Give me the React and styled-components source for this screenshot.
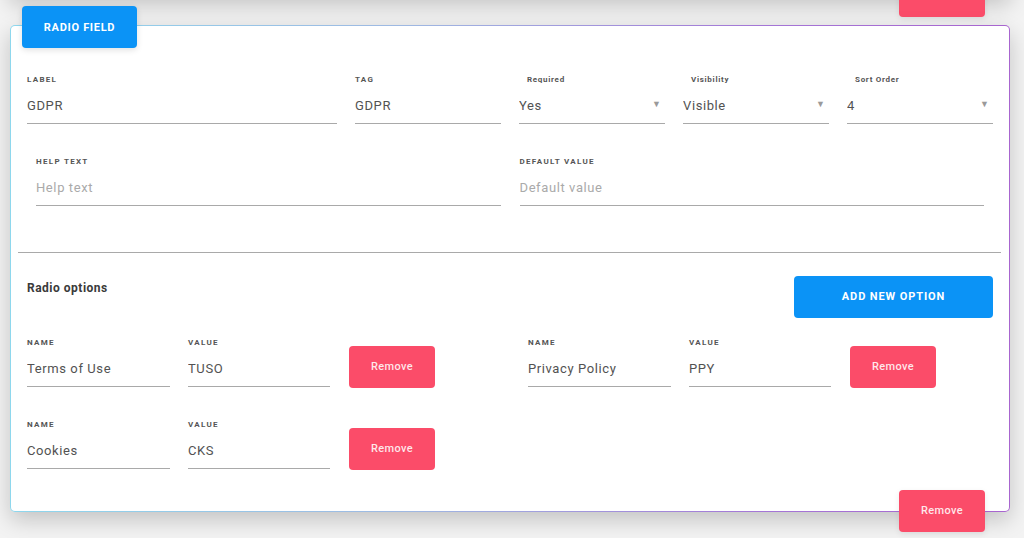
import React from 'react';
import styled, { createGlobalStyle } from 'styled-components';

const GlobalStyle = createGlobalStyle`
  html, body {
    margin: 0;
    padding: 0;
    background: #f3f3f3;
    font-family: Roboto, 'Liberation Sans', sans-serif;
    overflow: hidden;
  }
  * { box-sizing: border-box; }
`;

const Page = styled.div`
  width: 1024px;
  height: 538px;
  padding: 0 14px 0 10px;
  overflow: hidden;
`;

const Stack = styled.div`
  display: flex;
  flex-direction: column;
  gap: 28px;
  margin-top: -43px;
`;

const CardFrame = styled.section`
  position: relative;
  padding: 1px;
  border-radius: 5px;
  background: linear-gradient(90deg, #8ed7ed 0%, #9fb8e2 40%, #a476d6 75%, #a865cf 100%);
  box-shadow: 0 8px 22px rgba(0, 0, 0, 0.2);
  height: ${({ h }) => (h ? `${h}px` : 'auto')};
`;

const CardBody = styled.div`
  background: #fff;
  border-radius: 4px;
  height: 100%;
  padding: ${({ compact }) => (compact ? '0' : '49px 16px 42px 16px')};
`;

const Badge = styled.div`
  position: absolute;
  left: 12px;
  top: -19px;
  width: 115px;
  height: 42px;
  border-radius: 4px;
  background: #0b93f6;
  color: #fff;
  font-size: 11px;
  font-weight: 700;
  letter-spacing: 0.7px;
  display: flex;
  align-items: center;
  justify-content: center;
  box-shadow: 0 2px 6px rgba(0, 0, 0, 0.12);
`;

const Button = styled.button`
  border: none;
  border-radius: 4px;
  height: 42px;
  width: ${({ w }) => w}px;
  background: ${({ kind }) => (kind === 'danger' ? '#fb4c69' : '#0b93f6')};
  color: ${({ kind }) => (kind === 'danger' ? 'rgba(255,255,255,0.88)' : '#fff')};
  font-family: Roboto, 'Liberation Sans', sans-serif;
  font-size: 11px;
  font-weight: ${({ kind }) => (kind === 'danger' ? 500 : 700)};
  letter-spacing: ${({ kind }) => (kind === 'danger' ? '0.4px' : '0.9px')};
  text-transform: ${({ kind }) => (kind === 'danger' ? 'none' : 'uppercase')};
  padding: 0 0 2px;
  flex-shrink: 0;
  cursor: pointer;
`;

const CornerRemove = styled(Button)`
  position: absolute;
  right: 25px;
  bottom: -20px;
  box-shadow: 0 2px 6px rgba(0, 0, 0, 0.08);
`;

const Grid = styled.div`
  display: grid;
  grid-template-columns: repeat(6, 146px);
  column-gap: 18px;
`;

const Wide = styled.div`
  grid-column: span ${({ span }) => span};
`;

const HelpRow = styled.div`
  display: grid;
  grid-template-columns: 1fr 1fr;
  column-gap: 19px;
  padding: 0 9px;
  margin-top: 33px;
`;

const FieldWrap = styled.label`
  display: flex;
  flex-direction: column;
  width: ${({ w }) => (w ? `${w}px` : 'auto')};
  flex-shrink: 0;
`;

const FieldLabel = styled.span`
  display: block;
  height: 10px;
  line-height: 10px;
  margin-bottom: 8px;
  font-size: 8px;
  font-weight: 700;
  color: #555;
  letter-spacing: ${({ select }) => (select ? '0.7px' : '1.3px')};
  text-transform: ${({ select }) => (select ? 'none' : 'uppercase')};
  padding-left: ${({ select }) => (select ? '8px' : '0')};
`;

const InputBox = styled.div`
  position: relative;
  height: 31px;
  border-bottom: 1px solid #a9a9a9;
  padding-bottom: 6px;
`;

const Input = styled.input`
  width: 100%;
  height: 24px;
  border: none;
  outline: none;
  padding: 0;
  background: transparent;
  font-family: Roboto, 'Liberation Sans', sans-serif;
  font-size: 13px;
  letter-spacing: 0.6px;
  color: #525252;
  &::placeholder {
    color: #aaa;
  }
`;

const Arrow = styled.span`
  position: absolute;
  right: 4px;
  top: 6px;
  font-size: 9px;
  color: #9a9a9a;
`;

const Divider = styled.hr`
  border: none;
  border-top: 1px solid #a9a9a9;
  margin: 46px -8px 23px -9px;
`;

const OptionsHeader = styled.div`
  display: flex;
  justify-content: space-between;
  align-items: flex-start;
`;

const Heading = styled.h3`
  margin: 4px 0 0;
  font-size: 12px;
  line-height: 16px;
  font-weight: 700;
  color: #3a3a3a;
  letter-spacing: 0.5px;
`;

const OptionsGrid = styled.div`
  display: grid;
  grid-template-columns: 501px 1fr;
  row-gap: 33px;
  margin-top: 20px;
`;

const OptionRow = styled.div`
  display: flex;
  align-items: flex-end;
  gap: 18px;
  & > button {
    margin-left: 1px;
    margin-bottom: -1px;
  }
`;

const Field = ({ label, value, placeholder, w, select }) => (
  <FieldWrap w={w}>
    <FieldLabel select={select}>{label}</FieldLabel>
    <InputBox>
      <Input defaultValue={value} placeholder={placeholder} readOnly={select} />
      {select && <Arrow>▼</Arrow>}
    </InputBox>
  </FieldWrap>
);

const options = [
  { name: 'Terms of Use', value: 'TUSO' },
  { name: 'Privacy Policy', value: 'PPY' },
  { name: 'Cookies', value: 'CKS' },
];

export default function App() {
  return (
    <Page>
      <GlobalStyle />
      <Stack>
        {/* previous field card, scrolled mostly out of view */}
        <CardFrame h={40}>
          <CardBody compact />
          <CornerRemove kind="danger" w={86} aria-label="Remove" />
        </CardFrame>

        <CardFrame>
          <Badge>RADIO FIELD</Badge>
          <CardBody>
            <Grid>
              <Wide span={2}>
                <Field label="Label" value="GDPR" />
              </Wide>
              <Field label="Tag" value="GDPR" />
              <Field label="Required" value="Yes" select />
              <Field label="Visibility" value="Visible" select />
              <Field label="Sort Order" value="4" select />
            </Grid>

            <HelpRow>
              <Field label="Help text" placeholder="Help text" />
              <Field label="Default value" placeholder="Default value" />
            </HelpRow>

            <Divider />

            <OptionsHeader>
              <Heading>Radio options</Heading>
              <Button w={199}>Add new option</Button>
            </OptionsHeader>

            <OptionsGrid>
              {options.map((o) => (
                <OptionRow key={o.value}>
                  <Field label="Name" value={o.name} w={143} />
                  <Field label="Value" value={o.value} w={142} />
                  <Button kind="danger" w={86}>Remove</Button>
                </OptionRow>
              ))}
            </OptionsGrid>
          </CardBody>
          <CornerRemove kind="danger" w={86}>Remove</CornerRemove>
        </CardFrame>
      </Stack>
    </Page>
  );
}
